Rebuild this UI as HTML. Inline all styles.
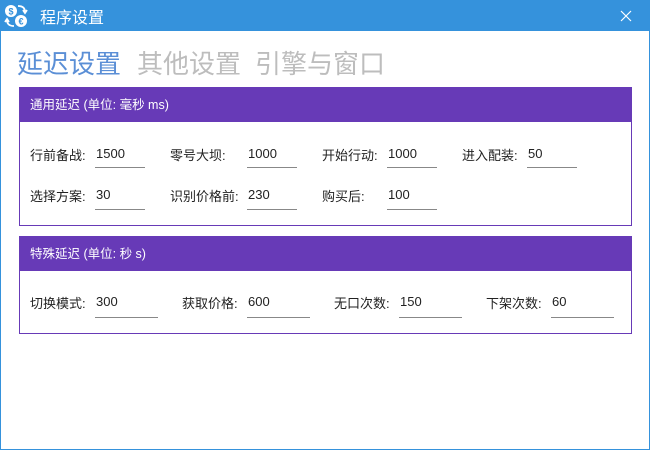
<!DOCTYPE html>
<html><head><meta charset="utf-8"><style>
*{margin:0;padding:0;box-sizing:border-box}
body{width:650px;height:450px;overflow:hidden;background:#fff;font-family:"Liberation Sans","Microsoft YaHei","Noto Sans CJK SC",sans-serif;position:relative}
.win{position:absolute;left:0;top:0;width:650px;height:450px;border:1px solid #3592dc;border-top:none}
.tb{position:absolute;left:0;top:0;width:650px;height:31px;background:#3592dc;color:#fff}
.tb .t{position:absolute;left:40px;top:4px;font-size:16px}
.tab{position:absolute;top:44px;font-size:26px;color:#bdbdbd}
.g{position:absolute;left:19px;width:613px;border:1px solid #673ab7}
.g .h{background:#673ab7;color:#fff;font-size:12.5px;height:34px;line-height:34px;padding-left:10px}
.a{position:absolute;font-size:13px;color:#222}
.u{position:absolute;height:1px;background:#888}
</style></head><body>
<div class="win"></div>
<div class="tb">
<svg style="position:absolute;left:3px;top:3px" width="26" height="26" viewBox="0 0 26 26">
<circle cx="8" cy="8" r="6" fill="#fff"/><circle cx="18" cy="18" r="6" fill="#fff"/>
<text x="8" y="11.5" font-size="9" text-anchor="middle" fill="#3592dc" font-weight="bold" font-family="Liberation Sans">$</text>
<text x="18" y="21.5" font-size="9" text-anchor="middle" fill="#3592dc" font-weight="bold" font-family="Liberation Sans">€</text>
<path d="M15 3 Q22 3 22 9 M20 7 L22 10 L24 7" stroke="#fff" stroke-width="1.8" fill="none"/>
<path d="M11 23 Q4 23 4 17 M2 19 L4 16 L6 19" stroke="#fff" stroke-width="1.8" fill="none"/>
</svg>
<div class="t">程序设置</div>
<svg style="position:absolute;left:620px;top:10px" width="12" height="12"><path d="M1 1L11 11M11 1L1 11" stroke="#fff" stroke-width="1.2"/></svg>
</div>
<div class="tab" style="left:17px;color:#5b8fd6">延迟设置</div>
<div class="tab" style="left:137px">其他设置</div>
<div class="tab" style="left:255px">引擎与窗口</div>

<div class="g" style="top:87px;height:139px"><div class="h">通用延迟 (单位: 毫秒 ms)</div></div>
<div class="g" style="top:236px;height:98px"><div class="h">特殊延迟 (单位: 秒 s)</div></div>

<div class="a" style="left:30px;top:145px">行前备战:</div><div class="a" style="left:96px;top:146px">1500</div><div class="u" style="left:95px;top:167px;width:50px"></div>
<div class="a" style="left:170px;top:145px">零号大坝:</div><div class="a" style="left:248px;top:146px">1000</div><div class="u" style="left:247px;top:167px;width:50px"></div>
<div class="a" style="left:322px;top:145px">开始行动:</div><div class="a" style="left:388px;top:146px">1000</div><div class="u" style="left:387px;top:167px;width:50px"></div>
<div class="a" style="left:462px;top:145px">进入配装:</div><div class="a" style="left:528px;top:146px">50</div><div class="u" style="left:527px;top:167px;width:50px"></div>

<div class="a" style="left:30px;top:186px">选择方案:</div><div class="a" style="left:96px;top:187px">30</div><div class="u" style="left:95px;top:209px;width:50px"></div>
<div class="a" style="left:170px;top:186px">识别价格前:</div><div class="a" style="left:248px;top:187px">230</div><div class="u" style="left:247px;top:209px;width:50px"></div>
<div class="a" style="left:322px;top:186px">购买后:</div><div class="a" style="left:388px;top:187px">100</div><div class="u" style="left:387px;top:209px;width:50px"></div>

<div class="a" style="left:30px;top:293px">切换模式:</div><div class="a" style="left:96px;top:294px">300</div><div class="u" style="left:95px;top:317px;width:63px"></div>
<div class="a" style="left:182px;top:293px">获取价格:</div><div class="a" style="left:248px;top:294px">600</div><div class="u" style="left:247px;top:317px;width:63px"></div>
<div class="a" style="left:334px;top:293px">无口次数:</div><div class="a" style="left:400px;top:294px">150</div><div class="u" style="left:399px;top:317px;width:63px"></div>
<div class="a" style="left:486px;top:293px">下架次数:</div><div class="a" style="left:552px;top:294px">60</div><div class="u" style="left:551px;top:317px;width:63px"></div>
</body></html>
